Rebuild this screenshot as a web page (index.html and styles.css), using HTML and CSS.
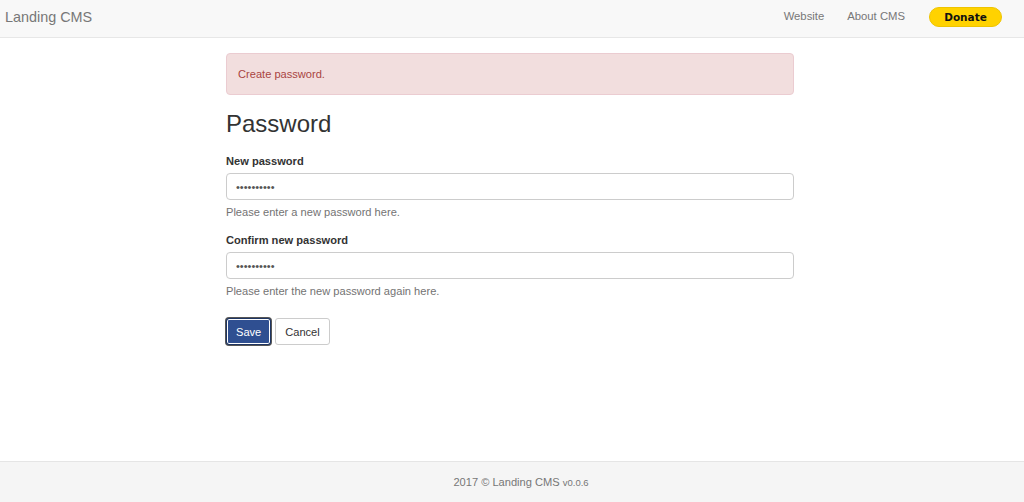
FILE: index.html
```html
<!DOCTYPE html>
<html lang="en">
<head>
<meta charset="utf-8">
<title>Password - Landing CMS</title>
<link rel="stylesheet" href="styles.css">
</head>
<body>
<header class="navbar">
  <a class="brand" href="#">Landing CMS</a>
  <nav class="nav">
    <a class="nav-link" href="#">Website</a>
    <a class="nav-link" href="#">About CMS</a>
    <a class="donate" href="#">Donate</a>
  </nav>
</header>
<main class="main">
  <div class="container">
    <div class="alert">Create password.</div>
    <h1 class="title">Password</h1>
    <form class="form">
      <div class="form-group">
        <label class="label" for="p1">New password</label>
        <input class="input" id="p1" type="password" value="1234567890">
        <div class="help">Please enter a new password here.</div>
      </div>
      <div class="form-group">
        <label class="label" for="p2">Confirm new password</label>
        <input class="input" id="p2" type="password" value="1234567890">
        <div class="help">Please enter the new password again here.</div>
      </div>
      <div class="actions">
        <button type="button" class="btn btn-primary">Save</button>
        <button type="button" class="btn btn-default">Cancel</button>
      </div>
    </form>
  </div>
</main>
<footer class="footer">
  <span>2017 © Landing CMS <small class="version">v0.0.6</small></span>
</footer>
</body>
</html>
```
FILE: styles.css
```css
* { box-sizing: border-box; }
html, body { margin: 0; padding: 0; }
body {
  font-family: "Liberation Sans", Arial, Helvetica, sans-serif;
  font-size: 11.1px;
  line-height: 17px;
  color: #333;
  background: #fff;
  min-height: 502px;
  display: flex;
  flex-direction: column;
}
a { text-decoration: none; }

.navbar {
  height: 38px;
  background: #f8f8f8;
  border-bottom: 1px solid #e7e7e7;
  display: flex;
  align-items: center;
  justify-content: space-between;
  padding: 0 22px 0 5px;
}
.brand {
  color: #777;
  font-size: 14.4px;
  line-height: 20px;
  margin-top: -4px;
}
.nav {
  display: flex;
  align-items: center;
  gap: 23px;
  margin-top: -5px;
}
.nav-link {
  color: #777;
  font-size: 11.3px;
}
.donate {
  margin-left: 1px;
  width: 73px;
  height: 20px;
  border-radius: 10px;
  background: #ffd200;
  border: 1px solid #eec400;
  color: #111;
  font-family: "DejaVu Sans", Verdana, sans-serif;
  font-weight: bold;
  font-size: 10.5px;
  display: flex;
  align-items: center;
  justify-content: center;
  margin-top: 2px;
}

.main {
  flex: 1;
  padding-right: 4px;
}
.container {
  width: 568px;
  margin: 0 auto;
  padding-top: 15px;
}
.alert {
  height: 42px;
  padding: 12px 11px;
  background: #f2dede;
  border: 1px solid #ebccd1;
  border-radius: 4px;
  color: #a94442;
}
.title {
  margin: 16px 0 16px;
  font-size: 24px;
  line-height: 26px;
  font-weight: normal;
  color: #333;
}
.form-group { margin-bottom: 11px; }
.label {
  display: block;
  font-weight: bold;
  margin-bottom: 3px;
}
.input {
  display: block;
  width: 100%;
  height: 27px;
  padding: 0 9px;
  border: 1px solid #ccc;
  border-radius: 4px;
  font-family: "Liberation Sans", Arial, sans-serif;
  font-size: 11px;
  color: #555;
  background: #fff;
}
.help {
  margin-top: 4px;
  color: #737373;
}
.actions {
  display: flex;
  gap: 4px;
  margin-top: 18px;
}
.btn {
  height: 27px;
  padding: 0 9px;
  font-family: "Liberation Sans", Arial, sans-serif;
  font-size: 11.1px;
  border-radius: 3px;
  cursor: pointer;
}
.btn-primary {
  width: 45px;
  color: #fff;
  background: #2f4f91;
  border: 1px solid #1e3563;
  box-shadow: 0 0 0 1px #fff inset, 0 0 0 1px #555;
}
.btn-default {
  width: 55px;
  color: #333;
  background: #fff;
  border: 1px solid #ccc;
}

.footer {
  height: 41px;
  background: #f5f5f5;
  border-top: 1px solid #e5e5e5;
  display: flex;
  align-items: center;
  justify-content: center;
  color: #777;
  padding-left: 18px;
}
.version { font-size: 9.5px; }
```
